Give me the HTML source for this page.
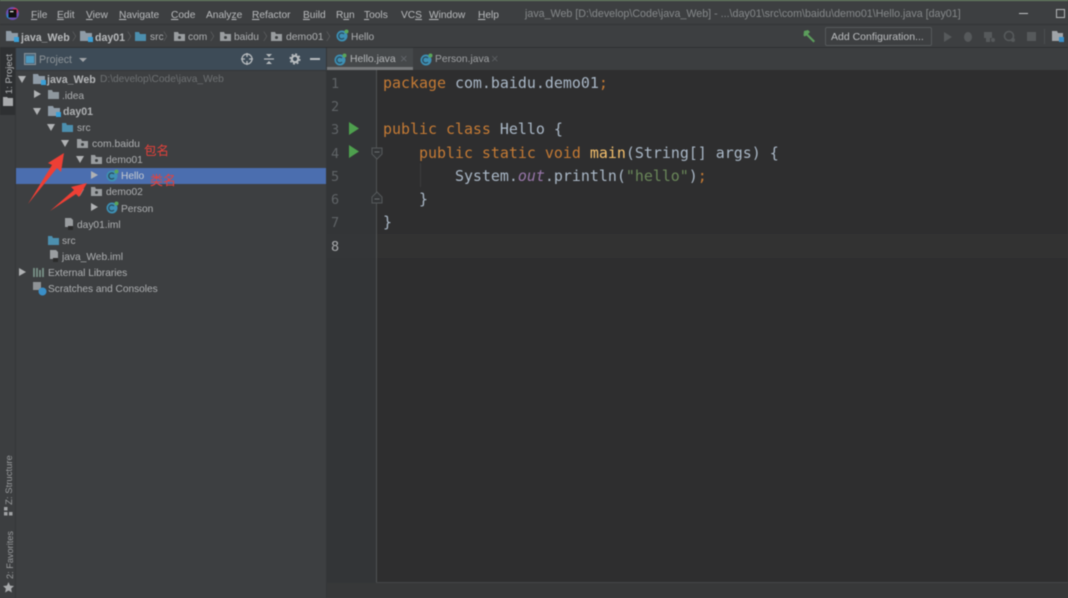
<!DOCTYPE html>
<html><head><meta charset="utf-8"><style>
html,body{margin:0;padding:0;background:#3c3f41}
#r{position:relative;width:1068px;height:598px;overflow:hidden;background:#3d3f41;font-family:"Liberation Sans","Noto Sans CJK SC",sans-serif;font-size:10.2px;color:#aeb0b2;filter:blur(.5px)}
#r div,#r span.a,#r svg{position:absolute}
.t{position:absolute;white-space:pre;line-height:14px;margin-top:2px}
.m{font-size:10.2px;top:6.5px;color:#b9bbbd}
.m u{text-decoration-thickness:1px;text-underline-offset:1px}
.c{position:absolute;font-family:"DejaVu Sans Mono",monospace;font-size:14.95px;line-height:20px;white-space:pre;color:#a9b7c6;left:383px}
.n{position:absolute;font-family:"DejaVu Sans Mono",monospace;font-size:13.5px;line-height:20px;color:#5f6366;left:331px;margin-top:1px}
.o{color:#c47a34}.y{color:#f5c06c}.g{color:#6a8759}.p{color:#9876aa;font-style:italic}
.b{font-weight:bold}
.tr{position:absolute;width:0;height:0;border-top:4px solid transparent;border-bottom:4px solid transparent;border-left:7px solid #b0b2b4;margin-top:-1px}
.dn{position:absolute;width:0;height:0;border-left:4px solid transparent;border-right:4px solid transparent;border-top:7px solid #b0b2b4;margin-left:-1px}
.sep{color:#5f6163}
</style></head><body><div id="r">
<!-- top bars -->
<div style="left:0;top:0;width:1068px;height:1px;background:#6d8a68"></div>
<div style="left:0;top:24px;width:1068px;height:1px;background:#323436"></div>
<div style="left:0;top:47px;width:1068px;height:1px;background:#2f3133"></div>
<!-- logo -->
<svg style="left:5px;top:6px" width="15" height="15" viewBox="0 0 15 15"><circle cx="7.5" cy="7.5" r="6.5" fill="#6b4fb0"/><circle cx="10" cy="5" r="3" fill="#d8345f"/><circle cx="4" cy="10" r="2.5" fill="#2f80c8"/><rect x="3.5" y="3.5" width="8" height="8" fill="#111"/><rect x="5" y="5" width="3.5" height="1.2" fill="#eee"/></svg>
<!-- menu -->
<span class="t m" style="left:31px"><u>F</u>ile</span>
<span class="t m" style="left:57px"><u>E</u>dit</span>
<span class="t m" style="left:86px"><u>V</u>iew</span>
<span class="t m" style="left:119px"><u>N</u>avigate</span>
<span class="t m" style="left:171px"><u>C</u>ode</span>
<span class="t m" style="left:206px">Analy<u>z</u>e</span>
<span class="t m" style="left:252px"><u>R</u>efactor</span>
<span class="t m" style="left:303px"><u>B</u>uild</span>
<span class="t m" style="left:336px">R<u>u</u>n</span>
<span class="t m" style="left:364px"><u>T</u>ools</span>
<span class="t m" style="left:401px">VC<u>S</u></span>
<span class="t m" style="left:429px"><u>W</u>indow</span>
<span class="t m" style="left:478px"><u>H</u>elp</span>
<span class="t" style="left:525px;top:5px;color:#85888a;font-size:10.7px">java_Web [D:\develop\Code\java_Web] - ...\day01\src\com\baidu\demo01\Hello.java [day01]</span>
<div style="left:1019px;top:13px;width:9px;height:1px;background:#c0c2c4"></div>
<div style="left:1056px;top:9px;width:7px;height:7px;border:1px solid #b5b7b9"></div>
<!-- breadcrumb -->
<svg style="left:6px;top:30px" width="14" height="14"><path d="M0 1h5l1 2h6v8H0z" fill="#8f9ba6"/><rect x="8" y="7" width="5" height="5" fill="#3aa0d8"/></svg>
<span class="t b" style="left:21px;top:29px;color:#b8babc;font-size:10.6px">java_Web</span>
<span class="t sep" style="left:72px;top:29px">〉</span>
<svg style="left:80px;top:30px" width="14" height="14"><path d="M0 1h5l1 2h6v8H0z" fill="#8f9ba6"/><rect x="8" y="7" width="5" height="5" fill="#3aa0d8"/></svg>
<span class="t b" style="left:95px;top:29px;color:#b8babc;font-size:10.6px">day01</span>
<span class="t sep" style="left:127px;top:29px">〉</span>
<svg style="left:135px;top:31px" width="12" height="11"><path d="M0 1h4l1 2h6v7H0z" fill="#4c8fae"/></svg>
<span class="t" style="left:150px;top:29px">src</span>
<span class="t sep" style="left:163px;top:29px">〉</span>
<svg style="left:174px;top:31px" width="12" height="11"><path d="M0 1h4l1 2h6v7H0z" fill="#9a9da0"/><circle cx="5.5" cy="6.5" r="1.5" fill="#3c3f41"/></svg>
<span class="t" style="left:188px;top:29px">com</span>
<span class="t sep" style="left:210px;top:29px">〉</span>
<svg style="left:220px;top:31px" width="12" height="11"><path d="M0 1h4l1 2h6v7H0z" fill="#9a9da0"/><circle cx="5.5" cy="6.5" r="1.5" fill="#3c3f41"/></svg>
<span class="t" style="left:234px;top:29px">baidu</span>
<span class="t sep" style="left:263px;top:29px">〉</span>
<svg style="left:271px;top:31px" width="12" height="11"><path d="M0 1h4l1 2h6v7H0z" fill="#9a9da0"/><circle cx="5.5" cy="6.5" r="1.5" fill="#3c3f41"/></svg>
<span class="t" style="left:286px;top:29px;font-size:10.4px">demo01</span>
<span class="t sep" style="left:326px;top:29px">〉</span>
<svg style="left:336px;top:29px" width="13" height="13"><circle cx="6" cy="7" r="5.5" fill="#3e90b4"/><path d="M8 5a3 3 0 1 0 0 4" fill="none" stroke="#2b4a5c" stroke-width="1.3"/><circle cx="10.5" cy="2.5" r="2" fill="#5aa65a"/></svg>
<span class="t" style="left:351px;top:29px">Hello</span>
<!-- toolbar right -->
<svg style="left:802px;top:29px" width="15" height="15"><path d="M2 2l4-1 2 2 -2 2 7 7-1.5 1.5-7-7-2 1-1-1z" fill="#5c9e5c"/></svg>
<div style="left:825px;top:27px;width:105px;height:17px;border:1px solid #55585a;border-radius:2px"></div>
<span class="t" style="left:831px;top:28px;color:#bcbec0;font-size:10.5px">Add Configuration...</span>
<svg style="left:942px;top:31px" width="12" height="12"><path d="M2 1l8 5-8 5z" fill="#56595b"/></svg>
<svg style="left:962px;top:30px" width="12" height="13"><ellipse cx="6" cy="7" rx="4" ry="5" fill="#56595b"/></svg>
<svg style="left:983px;top:30px" width="13" height="13"><path d="M1 2h8v6H7v4H3V8H1z" fill="#56595b"/><circle cx="10" cy="10" r="2" fill="#56595b"/></svg>
<svg style="left:1003px;top:30px" width="13" height="13"><circle cx="6" cy="6" r="4.5" fill="none" stroke="#56595b" stroke-width="1.6"/><circle cx="10" cy="10" r="2" fill="#56595b"/></svg>
<div style="left:1027px;top:32px;width:9px;height:9px;background:#56595b"></div>
<div style="left:1044px;top:29px;width:1px;height:15px;background:#4b4e50"></div>
<svg style="left:1051px;top:30px" width="14" height="13"><path d="M1 1h5l1 2h5v8H1z" fill="#a0a4a8"/><rect x="8" y="7" width="5" height="5" fill="#3a8fc8"/></svg>

<!-- left strip -->
<div style="left:0;top:48px;width:15px;height:550px;background:#3c3e40"></div>
<div style="left:0;top:48px;width:15px;height:67px;background:#2e3032"></div>
<div style="left:15px;top:48px;width:1px;height:550px;background:#343638"></div>
<span class="t" style="left:9.5px;top:72px;transform:translate(-50%,-50%) rotate(-90deg);font-size:9.5px;color:#b4b6b8">1: Project</span>
<svg style="left:3px;top:97px" width="10" height="9"><path d="M0 0h4l1 1h5v8H0z" fill="#a8aaac"/></svg>
<span class="t" style="left:9.5px;top:478px;transform:translate(-50%,-50%) rotate(-90deg);font-size:9.5px;color:#9a9c9e">Z: Structure</span>
<svg style="left:4px;top:507px" width="9" height="9"><path d="M0 0h3.5v3.5H0zM0 5h3.5v3.5H0zM5 5h3.5v3.5H5z" fill="#a0a2a4"/></svg>
<span class="t" style="left:9.5px;top:553px;transform:translate(-50%,-50%) rotate(-90deg);font-size:9.2px;color:#9a9c9e">2: Favorites</span>
<svg style="left:3px;top:582px" width="11" height="11"><path d="M5.5 0l1.6 3.6 3.9.4-2.9 2.6.8 3.9-3.4-2-3.4 2 .8-3.9L0 4l3.9-.4z" fill="#a8aaac"/></svg>

<!-- project header -->
<div style="left:16px;top:48px;width:310px;height:22px;background:#3d4b57"></div>
<div style="left:16px;top:70px;width:310px;height:1px;background:#343638"></div>
<svg style="left:24px;top:53px" width="12" height="12"><rect x=".5" y=".5" width="11" height="11" fill="#4a6a80" stroke="#8a9298"/><rect x="2" y="3" width="8" height="7" fill="#4c9ac0"/></svg>
<span class="t" style="left:39px;top:50.5px;color:#8e9498;font-size:10.6px">Project</span>
<div class="dn" style="left:80px;top:58px;border-top-width:4px;border-top-color:#a0a4a8"></div>
<svg style="left:240px;top:52px" width="14" height="14"><circle cx="7" cy="7" r="5" fill="none" stroke="#b8bcbf" stroke-width="1.3"/><path d="M7 1v4M7 9v4M1 7h4M9 7h4" stroke="#b8bcbf" stroke-width="1.3"/></svg>
<svg style="left:262px;top:52px" width="14" height="14"><path d="M2 7h10" stroke="#b8bcbf" stroke-width="1.2"/><path d="M4 2h6L7 5zM4 12h6L7 9z" fill="#b8bcbf"/></svg>
<svg style="left:288px;top:52px" width="14" height="14"><circle cx="7" cy="7" r="3.2" fill="none" stroke="#b8bcbf" stroke-width="2.2"/><circle cx="7" cy="7" r="4.9" fill="none" stroke="#b8bcbf" stroke-width="1.4" stroke-dasharray="2 1.85"/></svg>
<div style="left:310px;top:58px;width:10px;height:2px;background:#b8bcbf"></div>

<!-- tree -->
<div style="left:16px;top:168px;width:310px;height:16px;background:#4b6eaf"></div>
<div class="dn" style="left:19px;top:76px"></div>
<svg style="left:33px;top:73px" width="14" height="13"><path d="M0 1h5l1 2h6v8H0z" fill="#8f9ba6"/><rect x="8" y="7" width="5" height="5" fill="#3aa0d8"/></svg>
<span class="t b" style="left:47px;top:71px;color:#b4b6b8;font-size:10.6px">java_Web</span>
<span class="t" style="left:100px;top:71px;color:#6e7173;font-size:10.2px">D:\develop\Code\java_Web</span>
<div class="tr" style="left:34px;top:91px"></div>
<svg style="left:48px;top:89px" width="13" height="12"><path d="M0 1h4l1 2h6v7H0z" fill="#8e979d"/></svg>
<span class="t" style="left:62px;top:88px">.idea</span>
<div class="dn" style="left:34px;top:108px"></div>
<svg style="left:48px;top:105px" width="14" height="13"><path d="M0 1h5l1 2h6v8H0z" fill="#8f9ba6"/><rect x="8" y="7" width="5" height="5" fill="#3aa0d8"/></svg>
<span class="t b" style="left:63px;top:103px;font-size:10.6px">day01</span>
<div class="dn" style="left:48px;top:124px"></div>
<svg style="left:62px;top:122px" width="13" height="12"><path d="M0 1h4l1 2h6v7H0z" fill="#4c8fae"/></svg>
<span class="t" style="left:77px;top:120px">src</span>
<div class="dn" style="left:62px;top:140px"></div>
<svg style="left:77px;top:138px" width="13" height="12"><path d="M0 1h4l1 2h6v7H0z" fill="#9a9da0"/><circle cx="5.5" cy="6.5" r="1.5" fill="#3c3f41"/></svg>
<span class="t" style="left:92px;top:136px;font-size:10.4px">com.baidu</span>
<div class="dn" style="left:77px;top:156px"></div>
<svg style="left:91px;top:154px" width="13" height="12"><path d="M0 1h4l1 2h6v7H0z" fill="#9a9da0"/><circle cx="5.5" cy="6.5" r="1.5" fill="#3c3f41"/></svg>
<span class="t" style="left:106px;top:152px">demo01</span>
<div class="tr" style="left:91px;top:172px"></div>
<svg style="left:106px;top:169px" width="13" height="13"><circle cx="6" cy="7" r="5.5" fill="#3e90b4"/><path d="M8 5a3 3 0 1 0 0 4" fill="none" stroke="#2b4a5c" stroke-width="1.3"/><circle cx="10.5" cy="2.5" r="2" fill="#5aa65a"/></svg>
<span class="t" style="left:121px;top:168px;color:#c8ccd0">Hello</span>
<div class="dn" style="left:77px;top:189px"></div>
<svg style="left:91px;top:186px" width="13" height="12"><path d="M0 1h4l1 2h6v7H0z" fill="#9a9da0"/><circle cx="5.5" cy="6.5" r="1.5" fill="#3c3f41"/></svg>
<span class="t" style="left:106px;top:184px">demo02</span>
<div class="tr" style="left:91px;top:204px"></div>
<svg style="left:106px;top:201px" width="13" height="13"><circle cx="6" cy="7" r="5.5" fill="#3e90b4"/><path d="M8 5a3 3 0 1 0 0 4" fill="none" stroke="#2b4a5c" stroke-width="1.3"/><circle cx="10.5" cy="2.5" r="2" fill="#5aa65a"/></svg>
<span class="t" style="left:121px;top:200.5px">Person</span>
<svg style="left:64px;top:218px" width="12" height="13"><path d="M1 0h6l2 2v7H1z" fill="#9a9da0"/><rect x="4" y="8" width="5" height="4" fill="#2b2b2b"/></svg>
<span class="t" style="left:77px;top:216.5px">day01.iml</span>
<svg style="left:48px;top:235px" width="13" height="12"><path d="M0 1h4l1 2h6v7H0z" fill="#4c8fae"/></svg>
<span class="t" style="left:62px;top:233px">src</span>
<svg style="left:49px;top:250px" width="12" height="13"><path d="M1 0h6l2 2v7H1z" fill="#9a9da0"/><rect x="4" y="8" width="5" height="4" fill="#2b2b2b"/></svg>
<span class="t" style="left:62px;top:249px">java_Web.iml</span>
<div class="tr" style="left:19px;top:269px"></div>
<svg style="left:33px;top:267px" width="13" height="11"><path d="M1 1v9M4 1v9M7 3v7M10 1v9" stroke="#7f9a8e" stroke-width="1.6"/></svg>
<span class="t" style="left:48px;top:265px">External Libraries</span>
<svg style="left:33px;top:282px" width="14" height="14"><rect x="0" y="0" width="8" height="8" fill="#8f9396"/><circle cx="9.5" cy="9.5" r="4" fill="#3a8fc8"/></svg>
<span class="t" style="left:48px;top:281px;font-size:10.15px">Scratches and Consoles</span>

<!-- editor area -->
<div style="left:326px;top:48px;width:1px;height:550px;background:#343638"></div>
<div style="left:327px;top:48px;width:741px;height:22px;background:#3c3e40"></div>
<div style="left:327px;top:48px;width:86px;height:20px;background:#45484a"></div>
<div style="left:327px;top:67px;width:86px;height:3px;background:#77797b"></div>
<svg style="left:334px;top:53px" width="13" height="13"><circle cx="6" cy="7" r="5.5" fill="#3e90b4"/><path d="M8 5a3 3 0 1 0 0 4" fill="none" stroke="#2b4a5c" stroke-width="1.3"/><circle cx="10.5" cy="2.5" r="2" fill="#5aa65a"/></svg>
<span class="t" style="left:350px;top:50.5px;color:#b4b6b8;font-size:10.4px">Hello.java</span>
<span class="t" style="left:400px;top:50px;color:#62656a;font-size:13px">×</span>
<svg style="left:420px;top:53px" width="13" height="13"><circle cx="6" cy="7" r="5.5" fill="#3e90b4"/><path d="M8 5a3 3 0 1 0 0 4" fill="none" stroke="#2b4a5c" stroke-width="1.3"/><circle cx="10.5" cy="2.5" r="2" fill="#5aa65a"/></svg>
<span class="t" style="left:435px;top:50.5px;color:#a0a2a4;font-size:10.3px">Person.java</span>
<span class="t" style="left:491px;top:50px;color:#5a5d60;font-size:13px">×</span>
<div style="left:327px;top:70px;width:50px;height:513px;background:#333537"></div>
<div style="left:377px;top:70px;width:691px;height:513px;background:#2e2e2f"></div>
<div style="left:377px;top:234px;width:691px;height:24px;background:#323232"></div>
<div style="left:327px;top:234px;width:50px;height:24px;background:#343638"></div>
<div style="left:376px;top:70px;width:1px;height:513px;background:#505254"></div>
<div style="left:327px;top:583px;width:741px;height:15px;background:#373839"></div>
<div style="left:376px;top:582px;width:692px;height:1px;background:#444648"></div>

<span class="n" style="top:73px">1</span>
<span class="n" style="top:96px">2</span>
<span class="n" style="top:119px">3</span>
<span class="n" style="top:143px">4</span>
<span class="n" style="top:166px">5</span>
<span class="n" style="top:189px">6</span>
<span class="n" style="top:212px">7</span>
<span class="n" style="top:236px;color:#a8aaac">8</span>
<svg style="left:349px;top:122px" width="11" height="13"><path d="M0 0l10 6.5L0 13z" fill="#4ea04e"/></svg>
<svg style="left:349px;top:145px" width="11" height="13"><path d="M0 0l10 6.5L0 13z" fill="#4ea04e"/></svg>
<svg style="left:371px;top:147px" width="12" height="13"><path d="M1 1h10v6l-5 5-5-5z" fill="#333537" stroke="#55585a"/><path d="M3.5 5h5" stroke="#6a6d70"/></svg>
<svg style="left:371px;top:191px" width="12" height="13"><path d="M1 12h10V6L6 1 1 6z" fill="#333537" stroke="#55585a"/><path d="M3.5 8h5" stroke="#6a6d70"/></svg>
<div style="left:420px;top:163px;width:1px;height:24px;background:#3c3c3c"></div>

<span class="c" style="top:73px"><span class="o">package</span> com.baidu.demo01<span class="o">;</span></span>
<span class="c" style="top:119px"><span class="o">public class</span> Hello {</span>
<span class="c" style="top:143px">    <span class="o">public static void</span> <span class="y">main</span>(String[] args) {</span>
<span class="c" style="top:166px">        System.<span class="p">out</span>.println(<span class="g">"hello"</span>)<span class="o">;</span></span>
<span class="c" style="top:189px">    }</span>
<span class="c" style="top:212px">}</span>

<!-- annotations -->
<svg style="left:0;top:0" width="330" height="300">
<path d="M28 204L52 165 48 163 64 153 61 172 57 168z" fill="#ee3f35"/>
<path d="M50 211L74 190 71 187 87 183 79 197 76 194z" fill="#ee3f35"/>
</svg>
<span class="t" style="left:144px;top:142px;color:#e8413a;font-size:12.5px">包名</span>
<span class="t" style="left:150px;top:171.5px;color:#e8413a;font-size:13px">类名</span>
</div></body></html>
